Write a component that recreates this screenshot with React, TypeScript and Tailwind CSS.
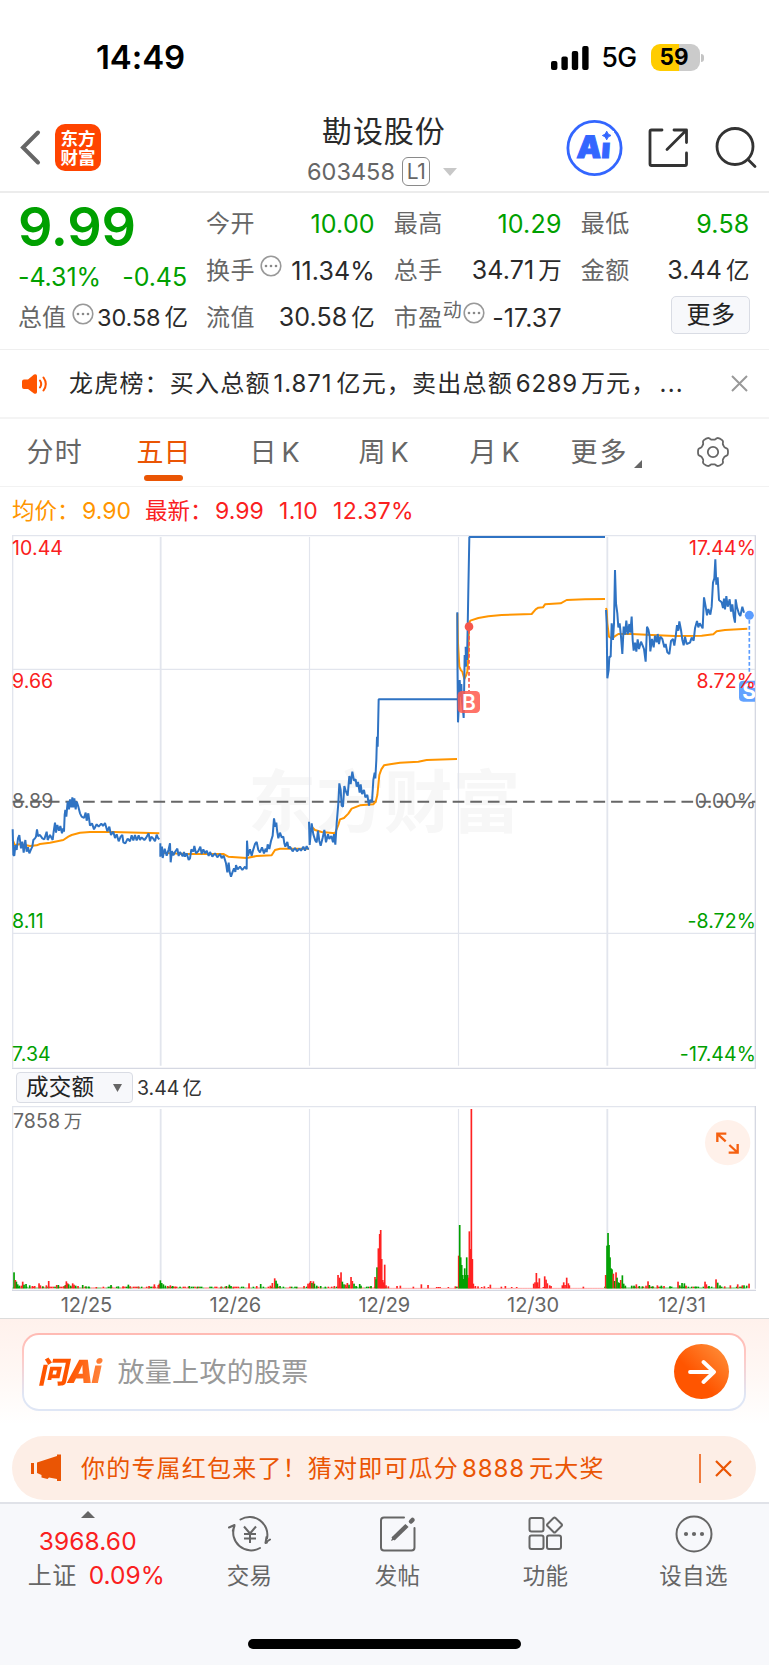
import React from "react";

type Bar = [number, number, "r" | "g"];

const DAY_1 =
  "38,1018 40,1095 43,1097 46,1065 50,1080 54,1045 58,1035 63,1075 67,1055 71,1088 76,1050 80,1085 84,1072 88,1090 93,1078 97,1070 100,1050 105,1045 108,1040 111,1018 114,1038 120,1035 127,1045 133,1048 140,1025 143,1050 150,1035 158,1050 161,1025 165,998 168,1028 172,1005 177,1022 181,1008 186,1030 190,1015 192,1025 194,975 196,960 199,980 203,935 207,958 210,928 214,952 217,922 220,952 223,925 227,958 230,935 235,950 240,970 245,980 252,984 257,968 260,992 265,970 270,1007 276,1000 282,1018 290,1003 296,1010 304,1001 309,1008 315,999 322,1024 328,1010 333,1035 340,1025 345,1044 350,1033 356,1054 362,1040 367,1035 370,1057 376,1060 383,1046 390,1054 395,1036 400,1051 405,1035 410,1051 416,1036 420,1050 425,1042 433,1050 438,1044 446,1030 450,1054 454,1040 460,1046 465,1054 470,1034 474,1044 478,1048";
const DAY_2 =
  "481,1060 481,1100 486,1070 488,1104 494,1076 500,1097 506,1078 510,1060 512,1117 516,1083 520,1096 525,1086 532,1076 536,1098 540,1086 548,1099 552,1086 555,1100 560,1090 566,1110 570,1105 574,1078 580,1085 583,1068 588,1090 595,1083 601,1070 605,1092 610,1078 615,1090 620,1082 626,1098 630,1086 637,1100 645,1090 652,1102 660,1092 665,1104 671,1097 678,1120 682,1147 686,1118 689,1146 693,1160 697,1148 702,1135 706,1146 708,1125 713,1138 720,1130 727,1140 735,1130 740,1138 741,1052 744,1097 750,1078 755,1097 760,1078 765,1062 770,1056 775,1080 780,1087 786,1072 792,1090 797,1076 800,1086 803,1063 808,1077 813,1053 818,1037 822,985 826,1010 829,998 831,1020 835,1045 840,1028 845,1042 850,1040 853,1060 856,1070 862,1056 866,1076 870,1070 878,1084 885,1074 891,1084 898,1076 903,1082 910,1070 915,1082 920,1068 923,1076 927,1076";
const DAY_3 =
  "927,995 929,1065 935,1000 940,1033 946,1052 950,1057 954,1022 958,1053 962,1067 968,1043 973,1020 978,1057 984,1033 988,1047 994,1038 999,1057 1002,1032 1006,1064 1010,1000 1015,940 1018,880 1022,900 1025,947 1029,950 1033,888 1038,905 1043,917 1048,858 1052,882 1057,845 1062,872 1067,868 1070,890 1074,876 1079,908 1082,883 1086,912 1092,900 1096,922 1102,915 1107,947 1110,930 1116,935 1120,870 1124,848 1126,865 1129,810 1131,740 1133,770 1136,628 1371,628";
const DAY_4 =
  "217,367 217,480 219,697 222,640 224,570 227,620 229,582 231,635 233,650 236,684 238,560 239,495 243,530 242,470 246,510 248,415 250,300 253,141 660,141";
const DAY_5 =
  "663,360 665,400 667,565 671,540 673,500 677,500 680,400 684,450 687,400 690,240 693,340 697,370 700,412 704,400 708,440 712,492 716,410 720,434 724,392 728,433 733,402 736,428 740,380 743,450 746,482 750,458 754,485 758,448 762,477 768,455 773,467 777,477 782,515 786,410 790,418 794,440 796,484 801,447 806,472 810,437 815,457 818,432 822,462 826,440 832,447 838,472 842,462 847,487 853,492 858,453 864,447 868,467 872,440 876,405 880,422 883,394 888,420 892,450 896,466 900,440 905,462 915,458 920,443 926,452 930,415 936,393 940,412 944,400 953,415 957,322 962,350 966,376 970,357 976,374 980,350 984,278 988,265 991,208 994,284 998,262 1002,330 1010,337 1014,354 1017,326 1020,358 1024,318 1028,350 1034,328 1038,365 1042,343 1046,378 1050,398 1052,328 1056,352 1062,372 1066,378 1072,350 1077,368";

const AVG = [
  "38,1050 45,1066 60,1062 90,1068 110,1066 120,1062 150,1058 190,1050 205,1040 215,1035 240,1028 270,1026 340,1026 478,1030",
  "481,1088 560,1092 670,1092 685,1100 740,1104 770,1098 815,1096 825,1080 840,1076 927,1076",
  "935,1010 945,1020 965,1026 1005,1030 1015,1005 1020,988 1032,984 1045,971 1055,956 1080,946 1120,943 1127,935 1132,915 1138,855 1144,838 1152,826 1170,823 1200,818 1255,815 1280,810 1371,807",
];
const AVG_LATE = [
  "217,370 219,460 223,530 228,541 232,545 238,567 243,557 247,545 250,500 252,400 256,392 280,384 310,379 350,375 440,372 452,358 460,353 474,352 480,343 527,340 545,330 600,328 660,327",
  "663,354 665,360 667,400 672,440 680,445 688,440 700,432 740,432 800,435 870,438 950,437 985,433 995,424 1020,420 1087,416",
];

const BARS: Bar[] = [
  [42, 48, "g"], [46, 25, "r"], [49, 20, "g"], [53, 12, "g"], [58, 8, "g"], [64, 8, "r"], [68, 20, "r"], [72, 11, "g"], [78, 13, "g"], [89, 9, "g"], [97, 7, "r"], [104, 7, "r"], [117, 15, "r"], [121, 9, "r"], [128, 6, "g"], [139, 9, "r"], [146, 22, "r"], [170, 10, "r"], [175, 10, "g"], [192, 7, "r"], [196, 10, "g"], [199, 21, "r"], [203, 15, "r"], [206, 12, "g"], [212, 8, "g"], [218, 15, "r"], [222, 11, "r"], [227, 8, "g"], [234, 7, "r"], [248, 10, "g"], [258, 6, "g"], [267, 5, "g"], [289, 4, "r"], [333, 10, "g"], [355, 6, "g"], [369, 6, "r"], [385, 11, "g"], [391, 6, "r"], [416, 5, "r"], [447, 7, "r"], [463, 12, "r"], [475, 10, "r"], [478, 14, "r"],
  [481, 24, "g"], [485, 16, "g"], [490, 12, "g"], [496, 8, "g"], [503, 7, "r"], [511, 9, "r"], [518, 7, "g"], [526, 5, "r"], [568, 7, "g"], [592, 5, "g"], [663, 5, "r"], [679, 7, "g"], [688, 11, "g"], [693, 7, "g"], [700, 5, "r"], [747, 15, "r"], [770, 7, "r"], [782, 13, "g"], [811, 8, "r"], [817, 16, "r"], [824, 30, "r"], [828, 23, "g"], [832, 14, "g"], [840, 7, "g"], [890, 5, "g"], [912, 7, "r"], [924, 14, "r"],
  [929, 17, "r"], [932, 22, "r"], [936, 16, "g"], [940, 21, "r"], [943, 14, "g"], [950, 8, "g"], [962, 7, "g"], [976, 5, "g"], [1003, 7, "r"], [1014, 40, "r"], [1019, 32, "r"], [1023, 48, "r"], [1027, 20, "g"], [1032, 12, "g"], [1037, 11, "r"], [1042, 16, "r"], [1047, 11, "g"], [1053, 34, "r"], [1057, 22, "r"], [1062, 14, "g"], [1068, 7, "g"], [1079, 13, "g"], [1083, 8, "g"], [1113, 7, "g"], [1125, 34, "r"], [1128, 27, "g"], [1131, 63, "g"], [1135, 120, "r"], [1139, 163, "r"], [1142, 175, "r"], [1145, 88, "r"], [1148, 25, "r"], [1151, 18, "r"], [1154, 71, "r"], [1158, 9, "r"], [1165, 6, "r"], [1191, 7, "r"], [1201, 8, "r"], [1240, 5, "r"], [1264, 12, "r"], [1284, 10, "r"], [1366, 6, "r"],
  [1376, 98, "r"], [1379, 190, "g"], [1382, 93, "g"], [1385, 70, "g"], [1388, 40, "g"], [1391, 28, "g"], [1394, 60, "g"], [1397, 40, "g"], [1400, 93, "g"], [1403, 40, "g"], [1406, 32, "r"], [1408, 171, "r"], [1411, 118, "r"], [1414, 538, "r"], [1417, 88, "r"], [1420, 14, "r"], [1426, 7, "r"], [1434, 6, "r"], [1453, 6, "r"], [1471, 11, "r"], [1504, 5, "r"], [1516, 7, "r"], [1601, 14, "r"], [1605, 18, "r"], [1609, 46, "r"], [1613, 18, "r"], [1618, 30, "r"], [1634, 36, "r"], [1638, 26, "r"], [1642, 15, "r"], [1649, 9, "r"], [1653, 7, "r"], [1687, 9, "r"], [1691, 18, "r"], [1695, 10, "r"], [1700, 32, "r"], [1705, 15, "r"], [1708, 9, "r"], [1750, 5, "r"],
  [1817, 40, "r"], [1821, 128, "g"], [1824, 166, "g"], [1827, 130, "g"], [1830, 93, "g"], [1833, 60, "g"], [1836, 57, "g"], [1840, 44, "r"], [1844, 22, "g"], [1848, 48, "r"], [1851, 32, "g"], [1855, 18, "g"], [1859, 16, "g"], [1862, 25, "r"], [1867, 39, "g"], [1871, 14, "g"], [1876, 8, "g"], [1895, 8, "g"], [1902, 8, "g"], [1909, 12, "r"], [1918, 7, "g"], [1927, 6, "g"], [1938, 8, "r"], [1944, 21, "r"], [1948, 10, "g"], [1958, 6, "g"], [1972, 9, "r"], [1984, 8, "g"], [1992, 7, "r"], [2010, 6, "g"], [2034, 20, "r"], [2039, 9, "g"], [2046, 16, "g"], [2053, 15, "g"], [2058, 8, "r"], [2087, 5, "g"], [2115, 20, "r"], [2119, 12, "r"], [2127, 7, "g"], [2148, 27, "r"], [2153, 17, "g"], [2160, 9, "g"], [2174, 6, "r"], [2191, 9, "r"], [2213, 12, "r"], [2227, 9, "r"], [2232, 9, "g"], [2240, 8, "g"], [2247, 14, "r"],
];

const isGreenStretch = (x: number) =>
  x < 90 || (x > 480 && x < 520) || (x > 1376 && x < 1404) || x > 1822;

const BASE: Bar[] = Array.from({ length: 440 }, (_, i) => {
  const x = 40 + i * 5;
  const n = Math.abs(Math.sin(i * 12.9898) * 43758.5453) % 1;
  const quiet = (x > 1160 && x < 1370) || (x > 1425 && x < 1815);
  const h = quiet ? (n > 0.85 ? 4 : 1.2) : n > 0.55 ? 5 : 2;
  const green = quiet ? false : isGreenStretch(x) ? n < 0.85 : Math.sin(i * 7.3) > 0;
  return [x, h, green ? "g" : "r"] as Bar;
}).filter(([x]) => x < 2250);

// Six rounded teeth, the first one pointing right.
const GEAR = Array.from({ length: 120 }, (_, i) => {
  const t = (i / 120) * Math.PI * 2;
  const r = 13.6 + 1.4 * Math.tanh(2.2 * (Math.cos(6 * t) + 0.2));
  return `${(17 + r * Math.cos(t)).toFixed(2)},${(17 + r * Math.sin(t)).toFixed(2)}`;
}).join(" ");

function Dots() {
  return (
    <svg className="h-[22px] w-[22px] shrink-0" viewBox="0 0 22 22" fill="none">
      <circle cx="11" cy="11" r="9.8" stroke="#999" strokeWidth="1.6" />
      <circle cx="6" cy="11" r="1.3" fill="#888" />
      <circle cx="11" cy="11" r="1.3" fill="#888" />
      <circle cx="16" cy="11" r="1.3" fill="#888" />
    </svg>
  );
}

function Stat({ label, value, unit, green, extra }: { label: string; value: string; unit?: string; green?: boolean; extra?: React.ReactNode }) {
  return (
    <div className="flex h-[47px] items-center justify-between whitespace-nowrap text-[24px] leading-[30px]">
      <span className="flex text-[#666]">
        <span className="tracking-[0.5px]">{label}</span>
        {extra}
      </span>
      <span className={green ? "text-[25px] tracking-[0.2px] text-[#00a000]" : "text-[25px] tracking-[0.1px] text-[#2a2a2a]"}>
        {value}
        {unit && <span className="ml-[4px] text-[23.5px] tracking-normal">{unit}</span>}
      </span>
    </div>
  );
}

function StatusBar() {
  return (
    <div className="flex h-[108px] items-center justify-between pl-[96px] pr-[65px] pt-[7px]">
      <span className="text-[33px] font-semibold leading-none tracking-[-0.1px] text-black">14:49</span>
      <div className="flex items-center">
        <svg className="h-[24px] w-[38px]" viewBox="0 0 38 24" fill="#000">
          <rect x="0" y="15" width="6.4" height="9" rx="2" />
          <rect x="10.4" y="10.5" width="6.4" height="13.5" rx="2" />
          <rect x="20.8" y="5" width="6.4" height="19" rx="2" />
          <rect x="31.2" y="0" width="6.4" height="24" rx="2" />
        </svg>
        <span className="ml-[13px] w-[35px] text-[26.5px] font-medium leading-none tracking-[-0.6px] text-black">5G</span>
        <div className="ml-[14px] flex h-[27px] w-[49px] items-center justify-center rounded-[9px] bg-[linear-gradient(90deg,#ffcc00_58%,#cbcbcb_58%)] pr-[2px] text-[22.5px] font-bold leading-none text-black">
          59
        </div>
        <div className="ml-[1.5px] h-[8px] w-[3px] rounded-r-full bg-[#c4c4c4]" />
      </div>
    </div>
  );
}

function Header() {
  return (
    <header className="flex h-[85px] items-center border-b-2 border-[#ececec]">
      <svg className="ml-[19px] mt-[-3px] h-[38px] w-[24px]" viewBox="0 0 24 38" fill="none" stroke="#666" strokeWidth="4" strokeLinecap="round" strokeLinejoin="miter">
        <path d="M19 3.5 4 18.5 19 33.5" />
      </svg>
      <div className="ml-[12px] mt-[-4px] flex h-[47px] w-[46px] flex-col items-center justify-center rounded-[10px] bg-[#ff4400] text-[17.5px] font-bold leading-[19px] text-white">
        <span>东方</span>
        <span>财富</span>
      </div>
      <div className="ml-[206px] mt-[2px] flex w-[150px] flex-col">
        <h1 className="ml-[15px] whitespace-nowrap text-[30px] leading-[32px] tracking-[0.9px] text-[#2a2a2a]">勘设股份</h1>
        <div className="mt-[10px] flex h-[30px] items-center">
          <span className="w-[95px] text-[23.5px] leading-none text-[#666]">603458</span>
          <span className="flex h-[29px] w-[28px] shrink-0 items-center justify-center rounded-[6px] border-[1.5px] border-[#8a8a8a] text-[21px] leading-none tracking-[-0.5px] text-[#666]">L1</span>
          <svg className="ml-[13px] h-[8px] w-[14px] shrink-0" viewBox="0 0 14 8" fill="#c8c8c8">
            <path d="M0 0h14L7 8z" />
          </svg>
        </div>
      </div>
      <svg className="ml-[108.5px] mt-[-6px] h-[58px] w-[58px]" viewBox="0 0 58 58" fill="none">
        <circle cx="28.5" cy="30" r="26.6" stroke="#3366ff" strokeWidth="2.8" />
        <text x="11" y="40.5" fontFamily="Inter" fontWeight="900" fontSize="31" fill="#3366ff" stroke="#3366ff" strokeWidth="1" transform="skewX(-4) translate(2 0)">Ai</text>
        <rect x="34" y="13" width="14" height="11.5" fill="#fff" />
        <path d="M40.7 13.2Q41.5 16.7 45 17.5Q41.5 18.3 40.7 21.8Q39.9 18.3 36.4 17.5Q39.9 16.7 40.7 13.2Z" fill="#3366ff" stroke="#3366ff" />
      </svg>
      <svg className="ml-[24.5px] mt-[-3px] h-[42px] w-[42px]" viewBox="0 0 42 42" fill="none" stroke="#333" strokeWidth="2.8" strokeLinecap="round" strokeLinejoin="round">
        <path d="M14 3H3.5A1.5 1.5 0 0 0 2 4.5V37A1.5 1.5 0 0 0 3.5 38.5H37A1.5 1.5 0 0 0 38.5 37V26M26 3H38.5V15.5M38.5 3 19 22.5" />
      </svg>
      <svg className="ml-[25px] mt-[-4px] h-[44px] w-[44px]" viewBox="0 0 44 44" fill="none" stroke="#333" strokeWidth="2.8" strokeLinecap="round">
        <circle cx="20" cy="20.5" r="18" />
        <path d="m33 33.5 7 7" />
      </svg>
    </header>
  );
}

function Quote() {
  return (
    <section className="flex h-[157px] gap-[19px] border-b-[1.5px] border-[#efefef] pl-[18px] pr-[19.5px]">
      <div className="w-[169px] pt-[4px]">
        <div className="flex h-[59px] items-center text-[54px] font-semibold leading-none tracking-[-0.2px] text-[#00a000]">9.99</div>
        <div className="flex h-[42px] items-center justify-between text-[25px] leading-none tracking-[-0.1px] text-[#00a000]">
          <span>-4.31%</span>
          <span>-0.45</span>
        </div>
        <div className="flex h-[40px] items-center whitespace-nowrap text-[24px] leading-[30px] text-[#666]">
          <span>总值</span>
          <span className="-mt-[8px] ml-[6px]"><Dots /></span>
          <span className="ml-[3px] text-[23.5px] tracking-[-0.1px] text-[#2a2a2a]">30.58<span className="ml-[4px]">亿</span></span>
        </div>
      </div>
      <div className="w-[169px] pt-[7px]">
        <Stat label="今开" value="10.00" green />
        <Stat label="换手" value="11.34%" extra={<span className="ml-[5px] mt-[-1px]"><Dots /></span>} />
        <Stat label="流值" value="30.58" unit="亿" />
      </div>
      <div className="w-[168px] pt-[7px]">
        <Stat label="最高" value="10.29" green />
        <Stat label="总手" value="34.71" unit="万" />
        <Stat
          label="市盈"
          value="-17.37"
          extra={
            <span className="flex">
              <span className="-mt-[7px] text-[19px]">动</span>
              <span className="ml-[1px] mt-[-1px]"><Dots /></span>
            </span>
          }
        />
      </div>
      <div className="w-[169px] pt-[7px]">
        <Stat label="最低" value="9.58" green />
        <Stat label="金额" value="3.44" unit="亿" />
        <div className="flex h-[42px] items-center justify-end">
          <button className="mr-[-1px] h-[38px] w-[79px] rounded-[5px] border-[1.5px] border-[#d9dce4] bg-[#f7f8fb] text-[24px] leading-none tracking-[0.5px] text-[#222]">更多</button>
        </div>
      </div>
    </section>
  );
}

function Notice() {
  return (
    <section className="flex h-[69px] items-center border-b-2 border-[#f4f4f4]">
      <svg className="ml-[21px] h-[24px] w-[28px]" viewBox="0 0 28 24" fill="none">
        <path d="M3 7.5H7L13 2.5Q16 1.5 16 4V20Q16 22.5 13 21.5L7 17H3Q1 17 1 15V9.5Q1 7.5 3 7.5Z" fill="#ff5500" />
        <path d="M19 8.5q2.4 3.5 0 7M22.5 5.5q4.6 6.5 0 13" stroke="#ff5500" strokeWidth="2" strokeLinecap="round" />
      </svg>
      <p className="ml-[20px] w-[640px] whitespace-nowrap text-[24px] leading-[32px] tracking-[1.2px] text-[#2a2a2a]">
        龙虎榜：买入总额<span className="ml-[3px] mr-[4px] tracking-[0.9px]">1.871</span>亿元，卖出总额<span className="mx-[3px] tracking-[0.7px]">6289</span>万元，<span className="ml-[3px]">...</span>
      </p>
      <svg className="ml-[22px] h-[17px] w-[17px]" viewBox="0 0 17 17" stroke="#999" strokeWidth="2">
        <path d="m1 1 15 15M16 1 1 16" />
      </svg>
    </section>
  );
}

function Tabs() {
  return (
    <nav className="flex h-[68px] items-start whitespace-nowrap border-b-[1.5px] border-[#f2f2f2] pt-[15px] text-[27px] leading-[38px] text-[#666]">
      <span className="ml-[26.5px] w-[110px] tracking-[1.2px]">分时</span>
      <span className="flex w-[54px] flex-col items-center text-[#ea5504]">
        五日
        <span className="mt-[3px] h-[6px] w-[39px] rounded-full bg-[#ea5504]" />
      </span>
      <span className="ml-[59px] w-[109px]">日<span className="ml-[5px]">K</span></span>
      <span className="w-[111px]">周<span className="ml-[5px]">K</span></span>
      <span className="w-[101px]">月<span className="ml-[5px]">K</span></span>
      <span className="tracking-[2px]">更多</span>
      <svg className="ml-[5px] mt-[26px] h-[8px] w-[8px]" viewBox="0 0 8 8" fill="#666">
        <path d="M8 0V8H0z" />
      </svg>
      <svg className="ml-[54px] mt-[1px] h-[34px] w-[34px]" viewBox="0 0 34 34" fill="none" stroke="#666" strokeWidth="1.8" strokeLinejoin="round">
        <polygon points={GEAR} />
        <circle cx="17" cy="17" r="5.2" />
      </svg>
    </nav>
  );
}

function PriceChart() {
  const label = "absolute text-[19.5px] leading-[24px] tracking-[0.1px]";
  return (
    <section className="relative h-[535px]">
      <svg className="block h-[535px] w-[769px]" viewBox="0 135 2307 1605" fill="none">
        <text x="744" y="1010" fontFamily="Noto Sans CJK SC" fontWeight="700" fontSize="205" letterSpacing="-1" fill="#f7f7f7">东方财富</text>
        <g stroke="#e2e5ed" strokeWidth="4">
          <path d="M38 1733V136.5H2266M38 538H2266" />
          <path d="M38 1330H2266" />
          <path d="M928.5 141V1727M1375.5 141V1727" strokeWidth="3.5" />
          <path d="M482 141V1727M1822 141V1727" strokeWidth="5.5" />
        </g>
        <path d="M36 1735H2266V136" stroke="#d5d8e2" strokeWidth="4" />
        <path d="M38 935.5H2266" stroke="#666" strokeWidth="6" strokeDasharray="35 17.8" />
        <g stroke="#ff9500" strokeWidth="6" strokeLinejoin="round">
          {AVG.map((p) => <polyline key={p} points={p} />)}
        </g>
        <g stroke="#2f73c3" strokeWidth="6" strokeLinejoin="bevel">
          <polyline points={DAY_1} />
          <polyline points={DAY_2} />
          <polyline points={DAY_3} />
        </g>
        <g transform="translate(1155 0)">
          <g stroke="#ff9500" strokeWidth="6" strokeLinejoin="round">
            {AVG_LATE.map((p) => <polyline key={p} points={p} />)}
          </g>
          <g stroke="#2f73c3" strokeWidth="6" strokeLinejoin="bevel">
            <polyline points={DAY_4} />
            <polyline points={DAY_5} />
          </g>
          <path d="M252 420V604" stroke="#f5574c" strokeWidth="5" strokeDasharray="11 7" />
          <circle cx="252" cy="410" r="13" fill="#f5574c" />
          <rect x="218" y="603" width="67" height="66" rx="13" fill="#ff5a4d" fillOpacity="0.85" />
          <text x="252" y="659" textAnchor="middle" fontFamily="Inter" fontWeight="600" fontSize="63" fill="#fff">B</text>
          <path d="M1093 390V545" stroke="#5a9cff" strokeWidth="5" strokeDasharray="11 7" />
          <circle cx="1093" cy="376" r="13.5" fill="#5a9cff" />
          <path d="M1110 572H1075Q1062 572 1062 585V622Q1062 635 1075 635H1110Z" fill="#62a2ff" />
          <clipPath id="plot-edge"><rect x="1050" y="560" width="60" height="90" /></clipPath>
          <text x="1072" y="627" fontFamily="Inter" fontWeight="700" fontSize="63" fill="#fff" clipPath="url(#plot-edge)">S</text>
        </g>
      </svg>
      <span className={`${label} left-[12px] top-[1px] text-[#fa2020]`}>10.44</span>
      <span className={`${label} left-[12px] top-[134px] text-[#fa2020]`}>9.66</span>
      <span className={`${label} left-[12px] top-[254px] text-[#666]`}>8.89</span>
      <span className={`${label} left-[12px] top-[374px] text-[#00a000]`}>8.11</span>
      <span className={`${label} left-[12px] top-[507px] text-[#00a000]`}>7.34</span>
      <span className={`${label} right-[13px] top-[1px] text-[#fa2020]`}>17.44%</span>
      <span className={`${label} right-[13px] top-[134px] text-[#fa2020]`}>8.72%</span>
      <span className={`${label} right-[13px] top-[254px] text-[#666]`}>0.00%</span>
      <span className={`${label} right-[13px] top-[374px] text-[#00a000]`}>-8.72%</span>
      <span className={`${label} right-[13px] top-[507px] text-[#00a000]`}>-17.44%</span>
    </section>
  );
}

function VolumeChart() {
  return (
    <section className="border-b-[1.5px] border-[#dcdcdc]">
      <div className="flex h-[36px] items-center pl-[16px] pb-[1px]">
        <button className="flex h-[31px] w-[117px] items-center rounded-[4px] border-[1.5px] border-[#d9dce4] bg-[#f7f8fb] pl-[9px] text-[22.5px] leading-none tracking-[0.3px] text-[#222]">
          成交额
          <svg className="ml-[19px] h-[8px] w-[9px]" viewBox="0 0 9 8" fill="#666"><path d="M0 0H9L4.5 8z" /></svg>
        </button>
        <span className="ml-[4px] text-[19.5px] leading-[28px] text-[#333]">3.44<span className="ml-[3px]">亿</span></span>
      </div>
      <div className="relative h-[186px]">
        <svg className="block h-[186px] w-[769px]" viewBox="0 678 2307 558" fill="none">
          <path d="M38 1230V680H2266M928.5 687V1226M1375.5 687V1226" stroke="#e2e5ed" strokeWidth="3.5" />
          <path d="M482 687V1226M1822 687V1226" stroke="#e2e5ed" strokeWidth="5.5" />
          <path d="M36 1231H2268M2266 678V1226" stroke="#d5d8e2" strokeWidth="4" />
          {[...BASE, ...BARS].map(([x, h, c], i) => (
            <rect key={i} x={x - 2.4} y={1225 - h} width="5" height={h} fill={c === "r" ? "#ff2222" : "#00a000"} />
          ))}
          <circle cx="2183" cy="788" r="68" fill="#fff1ea" />
          <g stroke="#f56010" strokeWidth="7">
            <path d="M2152 786V761H2179M2154 763 2177 784" />
            <path d="M2186 818H2213V792M2211 816 2188 795" />
          </g>
        </svg>
        <span className="absolute left-[13px] top-[1px] text-[19.5px] leading-[28px] tracking-[0.1px] text-[#666]">7858<span className="ml-[3.5px] text-[18.5px]">万</span></span>
      </div>
      <div className="flex h-[26px] items-center pl-[12px] text-center text-[20px] leading-none tracking-[-0.1px] text-[#666]">
        {["12/25", "12/26", "12/29", "12/30", "12/31"].map((d) => <span key={d} className="w-[148.9px]">{d}</span>)}
      </div>
    </section>
  );
}

function AskAi() {
  return (
    <section className="h-[117px] bg-[linear-gradient(180deg,#fff1ec_0%,#fff8f5_50%,#ffffff_90%)] pl-[22px] pr-[23px] pt-[14px]">
      <div className="h-[78px] rounded-[17px] bg-[linear-gradient(180deg,#ffbab3_0%,#ffc9c5_30%,#dfe6f5_80%)] p-[2px]">
        <div className="flex h-[74px] items-center rounded-[15px] bg-white">
          <span className="ml-[16px] w-[66px] -skew-x-12 whitespace-nowrap bg-[linear-gradient(90deg,#ff5500_45%,#ff8a45)] bg-clip-text text-[32px] font-black leading-[40px] tracking-[-1.6px] text-transparent">
            <span className="text-[30px]">问</span>Ai
          </span>
          <span className="ml-[11.5px] mt-[1px] text-[27px] leading-none tracking-[0.3px] text-[#999]">放量上攻的股票</span>
          <span className="-mt-[1px] ml-auto mr-[15px] flex h-[55px] w-[55px] items-center justify-center rounded-full bg-[linear-gradient(45deg,#ff5500_40%,#ff9540)]">
            <svg className="h-[26px] w-[28px]" viewBox="0 0 28 26" fill="none" stroke="#fff" strokeWidth="3.8" strokeLinecap="round" strokeLinejoin="round">
              <path d="M2 13H26M15.5 3 26 13 15.5 23" />
            </svg>
          </span>
        </div>
      </div>
    </section>
  );
}

function Promo() {
  return (
    <section className="mx-[12px] mb-[2px] flex h-[64px] w-[744px] items-center rounded-[32px] bg-[#fdeee6] text-[#ea5504]">
      <svg className="ml-[19px] h-[28px] w-[31px]" viewBox="0 0 31 28" fill="#ea5504">
        <path d="M0 9H3V20H0zM6 8.5 26 2V0.5H30V27H26V25L18 23.5 16.5 25 10.5 23.5V21L6 19z" />
      </svg>
      <span className="ml-[19px] mt-[1px] whitespace-nowrap text-[24px] leading-[30px] tracking-[1.2px]">
        你的专属红包来了！猜对即可瓜分<span className="ml-[3px] mr-[4px] tracking-[0.9px]">8888</span>元大奖
      </span>
      <span className="ml-auto h-[29px] w-[2px] bg-[#f07a3c]" />
      <svg className="ml-[14px] mr-[24px] h-[17px] w-[17px]" viewBox="0 0 17 17" stroke="#ea5504" strokeWidth="2.2"><path d="m1 1 15 15M16 1 1 16" /></svg>
    </section>
  );
}

function NavItem({ label, children }: { label: string; children: React.ReactNode }) {
  return (
    <div className="flex w-[148px] flex-col items-center pt-[8px]">
      <svg className="h-[44px] w-[44px]" viewBox="0 0 44 44" fill="none" stroke="#666" strokeWidth="2" strokeLinecap="round" strokeLinejoin="round">{children}</svg>
      <span className="mt-[5px] text-[22.5px] leading-[30px] tracking-[0.3px] text-[#666]">{label}</span>
    </div>
  );
}

function BottomBar() {
  return (
    <footer className="h-[164px] border-t-2 border-[#e0e2e8] bg-[#f7f8fb]">
      <div className="flex">
        <div className="flex w-[175.5px] flex-col items-center pt-[7px] text-[24.5px] leading-[30px] text-[#fa2020]">
          <svg className="h-[7px] w-[14px]" viewBox="0 0 14 7" fill="#666"><path d="M7 0 14 7H0z" /></svg>
          <span className="mt-[8px] tracking-[0.1px]">3968.60</span>
          <span className="ml-[17px] mt-[4px] whitespace-nowrap"><span className="mr-[12px] text-[24px] tracking-[0.5px] text-[#666]">上证</span>0.09%</span>
        </div>
        <NavItem label="交易">
          <path d="M12.5 7.5A17.8 17.8 0 0 1 39 26.5M39 30.5 37.5 31 38.5 25M42 27.5 37.5 30.5M32 36A17.8 17.8 0 0 1 6.5 14M1 15.5 6.5 13 4.8 19" />
          <path d="m16 14.5 6 7 6-7M22 21.5V31M16 22H28M16 26.5H28" strokeLinecap="butt" />
        </NavItem>
        <NavItem label="发帖">
          <path d="M28 5.5H8A3 3 0 0 0 5 8.5V35.5A3 3 0 0 0 8 38.5H35.5A3 3 0 0 0 38.5 35.5V16" />
          <path d="M17 27 31 13.5" strokeWidth="4.5" strokeLinecap="butt" />
          <path d="m15 29 2-5 3 3z" fill="#666" stroke="none" />
          <path d="m35 9.5 1.5-1.5" strokeWidth="4.5" />
        </NavItem>
        <NavItem label="功能">
          <rect x="5.5" y="6" width="14" height="13.5" rx="2" />
          <rect x="5.5" y="23.5" width="14" height="13.5" rx="2" />
          <rect x="23" y="23.5" width="14" height="13.5" rx="2" />
          <path d="M29.5 6Q30.5 5.2 31.5 6L37.5 12Q38.5 13 37.5 14L31.5 20Q30.5 21 29.5 20L23.5 14Q22.5 13 23.5 12Z" />
        </NavItem>
        <NavItem label="设自选">
          <circle cx="22" cy="22" r="17.5" />
          <g fill="#666" stroke="none"><circle cx="14" cy="22" r="2.1" /><circle cx="22" cy="22" r="2.1" /><circle cx="30" cy="22" r="2.1" /></g>
        </NavItem>
      </div>
      <div className="mx-auto mt-[48px] h-[10px] w-[273px] rounded-full bg-black" />
    </footer>
  );
}

export default function App() {
  return (
    <main className="w-[769px] overflow-hidden bg-white font-['Inter','Noto_Sans_CJK_SC',sans-serif]">
      <StatusBar />
      <Header />
      <Quote />
      <Notice />
      <Tabs />
      <div className="flex h-[48px] items-center whitespace-nowrap pl-[12px] text-[23px] leading-[30px] text-[#fa2020]">
        <span className="w-[70px] text-[22.5px] text-[#ff9500]">均价：</span>
        <span className="w-[63px] text-[#ff9500]">9.90</span>
        <span className="w-[70px] text-[22.5px]">最新：</span>
        <span className="w-[64px]">9.99</span>
        <span className="w-[54px] tracking-[0.3px]">1.10</span>
        <span className="tracking-[0.3px]">12.37%</span>
      </div>
      <PriceChart />
      <VolumeChart />
      <AskAi />
      <Promo />
      <BottomBar />
    </main>
  );
}
